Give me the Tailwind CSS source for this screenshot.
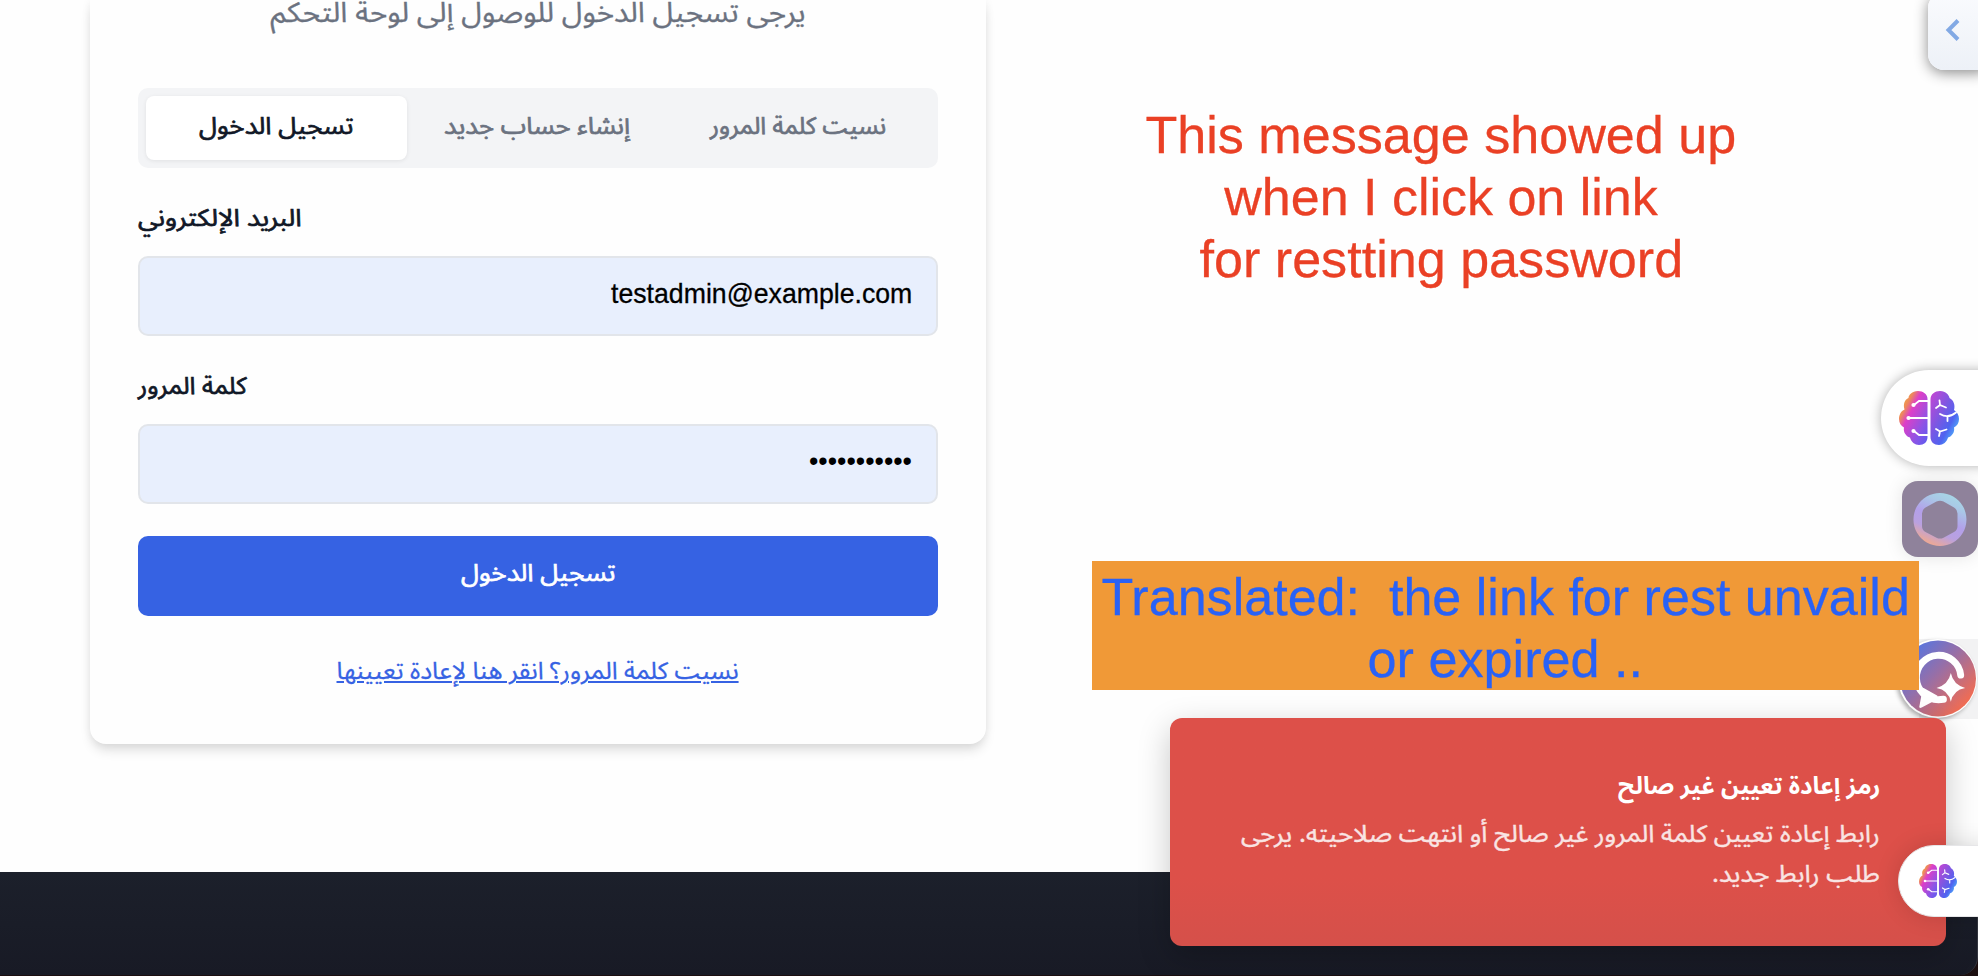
<!DOCTYPE html>
<html lang="ar">
<head>
<meta charset="utf-8">
<title>تسجيل الدخول</title>
<script src="https://cdn.jsdelivr.net/npm/@tailwindcss/browser@4"></script>
</head>
<body class="relative h-[976px] w-[1978px] overflow-hidden bg-[#fefefe] font-['Noto_Sans_Arabic','Noto_Naskh_Arabic','DejaVu_Sans',sans-serif] text-[#111827]">

<svg class="absolute size-0" aria-hidden="true">
  <defs>
    <linearGradient id="brainL" x1="0" y1="0" x2="1" y2="1">
      <stop offset=".1" stop-color="#f0b040"/><stop offset=".26" stop-color="#ee8a5a"/><stop offset=".4" stop-color="#dd3fc8"/><stop offset=".75" stop-color="#8a55e6"/><stop offset="1" stop-color="#5a5cf0"/>
    </linearGradient>
    <linearGradient id="brainR" x1="0" y1="0" x2="1" y2="1">
      <stop offset="0" stop-color="#c845d2"/><stop offset=".4" stop-color="#7d57e2"/><stop offset=".65" stop-color="#4f63f0"/><stop offset=".9" stop-color="#4fc4fb"/>
    </linearGradient>
    <symbol id="brain" viewBox="0 0 60 54">
      <path fill="url(#brainL)" d="M28.500 8C28.500 3 24 0 19 0C13 0 9.500 4 9.500 7C5.500 9 4 13 5.500 18.500C2 20 0 24 0 28C0 32 2 35 5 36.500C4 41 7 45.500 11 46.500C12 51 16 54 20 54C25 54 28.500 51 28.500 46Z"/>
      <path fill="url(#brainR)" d="M31.500 8C31.500 3 36 0 41 0C47 0 50 4 50.500 7C54.500 9 56.500 14 55 19C58 21 60 24 60 28C60 32 58 35 55 36.500C56 41 53 45.500 49 46.500C48 51 44 54 40 54C35 54 31.500 51 31.500 46Z"/>
      <g fill="none" stroke="#fff" stroke-width="1.800" stroke-linecap="round">
        <path d="M29 10H20L15 14M29 27H10M29 44H20L15 40M40.500 9.500L41 14L37 17M41 14L47 16.500M41 23Q49 28 57 21.500M48.500 25.500V30M37 38L41 40.500L47.500 38.500M41 40.500L40 45"/>
      </g>
      <g fill="#fff"><circle cx="14.500" cy="14" r="2.100"/><circle cx="9.500" cy="27" r="2.100"/><circle cx="14.500" cy="40" r="2.100"/></g>
    </symbol>
  </defs>
</svg>

<main class="flex h-[872px] items-start" dir="ltr">
  <section class="ml-[90px] flex h-[744px] w-[896px] flex-col rounded-b-2xl bg-[#fefefe] px-12 shadow-[0_8px_12px_-2px_rgba(0,0,0,0.13),0_0_10px_rgba(0,0,0,0.06)]">
    <p class="flex h-[88px] shrink-0 justify-center text-[28px] leading-[27px] text-[#6b7280] [-webkit-text-stroke:0.3px]"><span data-fit="535" dir="rtl" class="inline-block h-[27px] whitespace-nowrap">يرجى تسجيل الدخول للوصول إلى لوحة التحكم</span></p>
    <div class="flex h-20 rounded-[10px] bg-[#f3f4f6] p-2 text-[24px] leading-[62px] text-[#6b7280] [-webkit-text-stroke:0.7px]">
      <button class="flex h-16 w-[261px] justify-center rounded-lg bg-white text-[#111827] shadow-[0_1px_4px_rgba(0,0,0,0.08)]"><span data-fit="154" dir="rtl" class="inline-block whitespace-nowrap">تسجيل الدخول</span></button>
      <button class="flex h-16 w-[261px] justify-center"><span data-fit="186" dir="rtl" class="inline-block whitespace-nowrap">إنشاء حساب جديد</span></button>
      <button class="flex h-16 w-[261px] justify-center"><span data-fit="176" dir="rtl" class="inline-block whitespace-nowrap">نسيت كلمة المرور</span></button>
    </div>
    <label class="flex h-[88px] pt-7 text-[24px] leading-[46px] [-webkit-text-stroke:0.7px]"><span data-fit="164" dir="rtl" class="inline-block origin-left whitespace-nowrap">البريد الإلكتروني</span></label>
    <div class="flex h-20 justify-end rounded-[10px] border-2 border-[#e2e5ea] bg-[#e8effd] px-6 font-['Liberation_Sans',Arial,sans-serif] text-[28px] leading-[72px] text-black [-webkit-text-stroke:0.3px]"><span data-fit="301" class="inline-block origin-right whitespace-nowrap">testadmin@example.com</span></div>
    <label class="flex h-[88px] pt-7 text-[24px] leading-[46px] [-webkit-text-stroke:0.7px]"><span data-fit="109" dir="rtl" class="inline-block origin-left whitespace-nowrap">كلمة المرور</span></label>
    <div class="flex h-20 justify-end rounded-[10px] border-2 border-[#e2e5ea] bg-[#e8effd] px-6 font-['Liberation_Sans',Arial,sans-serif] text-[27px] leading-[71px] text-black"><span data-fit="103" class="inline-block origin-right whitespace-nowrap">•••••••••••</span></div>
    <button class="mt-8 flex h-20 justify-center rounded-[10px] bg-[#3662e3] text-[24px] leading-[76px] text-white [-webkit-text-stroke:0.7px]"><span data-fit="154" dir="rtl" class="inline-block whitespace-nowrap">تسجيل الدخول</span></button>
    <a class="mt-8 flex h-12 justify-center text-[24px] leading-[48px] text-[#3662e3] [-webkit-text-stroke:0.3px]"><span data-fit="402" dir="rtl" class="inline-block whitespace-nowrap underline decoration-2 underline-offset-2">نسيت كلمة المرور؟ انقر هنا لإعادة تعيينها</span></a>
  </section>
  <p class="ml-[105px] mt-[104px] w-[700px] text-center font-['Liberation_Sans',Arial,sans-serif] text-[52px] leading-[62px] text-[#ea4025] [-webkit-text-stroke:0.3px]">
    <span data-fit="591" class="inline-block whitespace-nowrap">This message showed up</span><br>
    <span data-fit="434" class="inline-block whitespace-nowrap">when I click on link</span><br>
    <span data-fit="484" class="inline-block whitespace-nowrap">for restting password</span>
  </p>
</main>
<footer class="h-[104px] bg-[#1c0f10]">
  <div class="h-[103px] rounded-br-[18px] border-r border-[#33363f] bg-linear-to-b from-[#1c202b] to-[#181a25]"></div>
</footer>

<!-- browser extension buttons docked on the right edge -->
<div class="absolute -top-2 left-[1928px] h-[78px] w-16 rounded-2xl bg-linear-to-b from-[#fafbfe] to-[#edf1f7] shadow-[0_3px_14px_rgba(0,0,0,0.45)]">
  <svg class="absolute left-[17px] top-[26px]" width="16" height="24" viewBox="0 0 16 24" fill="none" stroke="#82a9e4" stroke-width="4"><path d="M13 2.500L3.500 12L13 21.500"/></svg>
</div>
<div class="absolute left-[1881px] top-[370px] h-24 w-[110px] rounded-l-full bg-white shadow-[0_0_12px_rgba(0,0,0,0.3)]"><svg class="absolute left-[18px] top-[21px]" width="60" height="54"><use href="#brain"/></svg></div>
<div class="absolute left-[1902px] top-[481px] size-[76px] rounded-2xl bg-[#8f829b] shadow-[0_0_18px_rgba(0,0,0,0.1)]">
  <svg class="absolute left-[11px] top-3" width="54" height="54" viewBox="0 0 54 54">
    <defs><linearGradient id="ring" x1=".75" y1="0" x2=".3" y2="1"><stop offset="0" stop-color="#a6d8e6"/><stop offset=".22" stop-color="#a9c8e6"/><stop offset=".5" stop-color="#b3a0ea"/><stop offset=".72" stop-color="#b9a1e0"/><stop offset=".95" stop-color="#eaa898"/></linearGradient></defs>
    <path fill="url(#ring)" fill-rule="evenodd" d="M27 0A26.500 26.500 0 1 1 26.900 0ZM23.500 8.500L12.500 14.500Q9 16.500 9 20.500V33Q9 37 12.500 39L23.500 44.700Q27 46.500 30.500 44.700L41 39Q44.500 37 44.500 33V20.500Q44.500 16.500 41 14.500L30.500 8.500Q27 7 23.500 8.500Z"/>
  </svg>
</div>
<div class="absolute left-[1919px] top-[639px] h-20 w-[59px] bg-[#f2f2f3]"></div>
<div class="absolute left-[1898px] top-[639px] size-[79px] rounded-full bg-white shadow-[-2px_2px_4px_rgba(0,0,0,0.3)]">
  <svg class="absolute left-0.5 top-px" width="76" height="77" viewBox="0 0 77 77">
    <defs><linearGradient id="chat" x1=".1" y1=".1" x2=".9" y2=".85"><stop offset="0" stop-color="#5076e6"/><stop offset=".45" stop-color="#966fa8"/><stop offset=".95" stop-color="#ee6c55"/></linearGradient></defs>
    <circle cx="38.500" cy="38.500" r="38.500" fill="url(#chat)"/>
    <path d="M61.500 35A22.500 22.500 0 1 0 39 60L44 59.500" fill="none" stroke="#fff" stroke-width="7" stroke-linecap="round"/>
    <path d="M15 46L22 54L19.500 67.500Q20 69 22 68L34 61.500L38 56L24 48Z" fill="#fff"/>
    <path d="M51.500 33Q54 45 66 48Q54 50 51.500 62Q49 50 37 48Q49 45 51.500 33Z" fill="#fff"/>
  </svg>
</div>

<div class="absolute left-[1092px] top-[561px] h-[129px] w-[827px] bg-[#f09937] pt-[5px] text-center font-['Liberation_Sans',Arial,sans-serif] text-[52px] leading-[62px] text-[#2962f6] [-webkit-text-stroke:0.3px]">
  <span data-fit="808" class="inline-block whitespace-pre">Translated:  the link for rest unvaild</span><br>
  <span data-fit="276" class="inline-block whitespace-nowrap">or expired ..</span>
</div>

<div dir="rtl" class="absolute left-[1170px] top-[718px] h-[228px] w-[776px] rounded-xl bg-linear-to-b from-[#dd5049] from-70% to-[#d5504a] pr-[66px] pt-[49px] text-[24px] text-white shadow-[0_10px_32px_rgba(0,0,0,0.22)]">
  <h2 class="font-bold leading-10"><span data-fit="262" class="inline-block origin-right whitespace-nowrap">رمز إعادة تعيين غير صالح</span></h2>
  <p class="mt-2 leading-10 text-[#f9e4e3] [-webkit-text-stroke:0.4px]"><span data-fit="639" class="inline-block origin-right whitespace-nowrap">رابط إعادة تعيين كلمة المرور غير صالح أو انتهت صلاحيته. يرجى</span><br><span data-fit="168" class="inline-block origin-right whitespace-nowrap">طلب رابط جديد.</span></p>
</div>

<div class="absolute left-[1898px] top-[845px] h-[72px] w-24 rounded-l-full border border-[#e6e6e8] bg-white shadow-[0_0_24px_rgba(0,0,0,0.14)]"><svg class="absolute left-5 top-[17px]" width="38" height="36"><use href="#brain" width="38" height="36"/></svg></div>

<script>
  // Stretch each label horizontally to its design width, again whenever its natural width changes.
  const fit = (el) => { el.style.transform = 'scaleX(' + el.dataset.fit / el.offsetWidth + ')'; };
  const watcher = new ResizeObserver((entries) => entries.forEach((e) => fit(e.target)));
  document.querySelectorAll('[data-fit]').forEach((el) => watcher.observe(el));
  window.addEventListener('load', () => document.querySelectorAll('[data-fit]').forEach(fit));
</script>
</body>
</html>
